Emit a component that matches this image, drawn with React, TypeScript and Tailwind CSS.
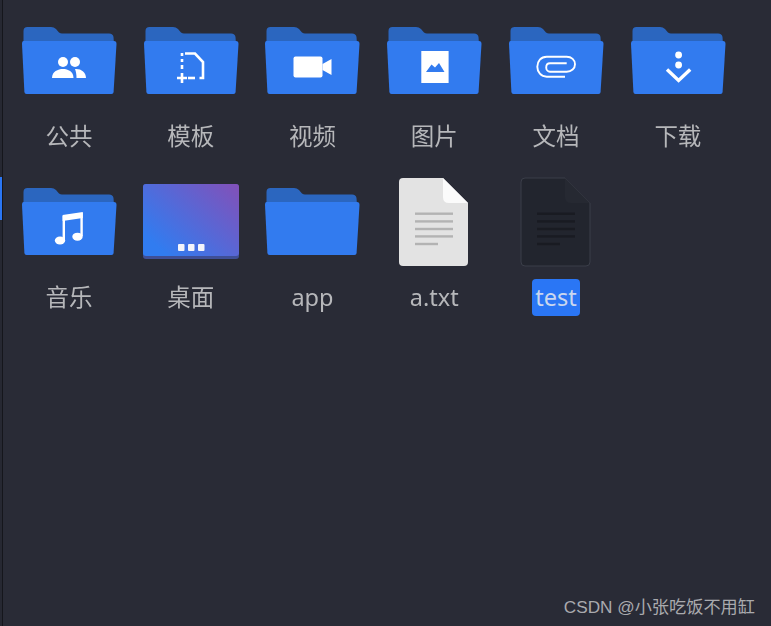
import React from "react";

const cjk = { fontFamily: '"Noto Sans", "Noto Sans CJK SC", sans-serif' };

function Folder({ children }: { children?: React.ReactNode }) {
  return (
    <svg width="96" height="70" viewBox="0 0 96 70" className="block">
      <path d="M2.5 7 Q2.5 3 6.5 3 H30 Q33 3 35 5 L38 8.5 Q39.5 9.5 41 9.5 H88 Q92 9.5 92.5 13 L93 20 H2.5 Z" fill="#2b66bf" />
      <path d="M2.5 17 H93 Q95.5 17 95.5 20 L92.6 68 Q92.4 70 90.5 70 H5.5 Q3.6 70 3.4 68 L1 20 Q1 17 2.5 17 Z" fill="#327bef" />
      {children}
    </svg>
  );
}

const People = (
  <g fill="#fff">
    <circle cx="42" cy="38" r="5" />
    <circle cx="54" cy="38" r="5" />
    <path d="M31 54 C31 47.5 37 45 42 45 C47 45 52.5 47.5 52.5 54 Z" />
    <path d="M54 45 C60 44.5 65 48 65 54 H55.5 C55.5 50.5 55 47.5 54 45 Z" />
  </g>
);
const Template = (
  <g fill="none" stroke="#fff" strokeWidth="2.6">
    <path d="M39 29 V32 M39 35 V38 M39 41 V45" />
    <path d="M42 29.5 H52 L60 38 V54 H56.5" />
    <path d="M45 54 H52" />
    <path d="M34 54 H44 M39 49 V59" />
  </g>
);
const Video = (
  <g fill="#fff">
    <rect x="29.5" y="32.5" width="29" height="21" rx="2" />
    <path d="M58.5 40 L67.5 35 V51 L58.5 46 Z" />
  </g>
);
const Picture = (
  <g>
    <rect x="35.3" y="27" width="27.3" height="32" fill="#fff" />
    <path d="M40 48 L45.5 40.5 L49 43.5 L53 39 L58.5 48 Z" fill="#327bef" />
  </g>
);
const Clip = (
  <g fill="none" stroke="#fff" strokeWidth="1.9">
    <path d="M57 52.7 H38.7 C33 52.7 29.3 48 29.3 42.7 C29.3 37 33 32.7 38.7 32.7 H58.7 C63.5 32.7 67 36 67 40.2 C67 44.5 63.5 47.7 58.7 47.7 H42 C39.8 47.7 38.2 45.8 38.2 43.5 C38.2 41 39.8 39.3 42 39.3 H58.7" />
  </g>
);
const Download = (
  <g>
    <circle cx="48.6" cy="31" r="3.4" fill="#fff" />
    <circle cx="48.6" cy="41" r="3.4" fill="#fff" />
    <path d="M37 45.5 L48.6 56.5 L60.2 45.5" fill="none" stroke="#fff" strokeWidth="3.4" />
  </g>
);
const Music = (
  <g>
    <path d="M42.8 55 V31 M60.6 51 V28" fill="none" stroke="#fff" strokeWidth="2.4" />
    <path d="M41.6 30 L61.8 27 V33 L41.6 36 Z" fill="#fff" />
    <ellipse cx="39" cy="55.5" rx="5.2" ry="4" fill="#fff" />
    <ellipse cx="56.5" cy="51.7" rx="5.2" ry="4" fill="#fff" />
  </g>
);

function Desktop() {
  return (
    <svg width="98" height="76" viewBox="0 0 98 76" className="block">
      <defs>
        <linearGradient id="desk" x1="0.05" y1="0.75" x2="1" y2="0">
          <stop offset="0" stopColor="#317cf0" />
          <stop offset="1" stopColor="#8350b8" />
        </linearGradient>
      </defs>
      <rect x="1" y="1" width="96" height="75" rx="3" fill="#3f4f96" />
      <rect x="1" y="1" width="96" height="72" rx="3" fill="url(#desk)" />
      <rect x="36" y="61" width="6.5" height="7" rx="1" fill="#f4f4fa" />
      <rect x="46" y="61" width="6.5" height="7" rx="1" fill="#f4f4fa" />
      <rect x="56" y="61" width="6.5" height="7" rx="1" fill="#f4f4fa" />
    </svg>
  );
}

function FileLines({ fill }: { fill: string }) {
  return (
    <g fill={fill}>
      <rect x="17" y="35.5" width="38" height="2.4" />
      <rect x="17" y="43.2" width="38" height="2.4" />
      <rect x="17" y="50.8" width="38" height="2.4" />
      <rect x="17" y="58.2" width="38" height="2.4" />
      <rect x="17" y="65.8" width="23" height="2.4" />
    </g>
  );
}

function TextFile() {
  return (
    <svg width="72" height="90" viewBox="0 0 72 90" className="mt-[4px] block">
      <path d="M5 1 H45 L70 26 V85 Q70 89 66 89 H5 Q1 89 1 85 V5 Q1 1 5 1 Z" fill="#e3e3e3" />
      <path d="M45 1 L70 26 H51 Q45 26 45 20 Z" fill="#fbfbfb" />
      <FileLines fill="#b3b3b3" />
    </svg>
  );
}

function DarkFile() {
  return (
    <svg width="72" height="90" viewBox="0 0 72 90" className="mt-[4px] block">
      <path d="M5 1 H45 L70 26 V85 Q70 89 66 89 H5 Q1 89 1 85 V5 Q1 1 5 1 Z" fill="#22252e" stroke="#3b3e49" strokeWidth="1" />
      <path d="M45 1 L70 26 H51 Q45 26 45 20 Z" fill="#262932" />
      <FileLines fill="#191b22" />
    </svg>
  );
}

function Item({ icon, label, selected }: { icon: React.ReactNode; label: string; selected?: boolean }) {
  return (
    <div className="flex h-[161px] flex-col items-center">
      <div className="flex h-[92px] items-center justify-center">{icon}</div>
      <div className="mt-[12px] flex h-[38px] items-center justify-center">
        <span
          style={cjk}
          className={
            selected
              ? "rounded-[4px] bg-[#2a76f5] px-[3px] text-[23.5px] leading-[37px] text-[#c9d6ee]"
              : "text-[23.5px] leading-[37px] text-[#b6b7ba]"
          }
        >
          {label}
        </span>
      </div>
    </div>
  );
}

export default function App() {
  return (
    <div className="relative flex h-[626px] w-[771px] overflow-hidden bg-[#292b36]">
      <div className="relative h-full w-[3px] shrink-0 border-r border-[#15161c] bg-[#262832]">
        <div className="absolute left-0 top-[177px] h-[43px] w-[2px] bg-[#2a76f5]" />
      </div>
      <div className="grid h-fit grid-cols-[repeat(6,121.8px)] pl-[5px] pt-[13px] blur-[0.4px]">
        <Item label="公共" icon={<Folder>{People}</Folder>} />
        <Item label="模板" icon={<Folder>{Template}</Folder>} />
        <Item label="视频" icon={<Folder>{Video}</Folder>} />
        <Item label="图片" icon={<Folder>{Picture}</Folder>} />
        <Item label="文档" icon={<Folder>{Clip}</Folder>} />
        <Item label="下载" icon={<Folder>{Download}</Folder>} />
        <Item label="音乐" icon={<Folder>{Music}</Folder>} />
        <Item label="桌面" icon={<div className="mt-[2px]"><Desktop /></div>} />
        <Item label="app" icon={<Folder />} />
        <Item label="a.txt" icon={<TextFile />} />
        <Item label="test" selected icon={<DarkFile />} />
      </div>
      <span
        className="absolute bottom-[9px] right-[16px] text-[17.2px] leading-[20px] text-[#a9aaae]"
        style={{ fontFamily: '"Liberation Sans", "Noto Sans CJK SC", sans-serif' }}
      >
        CSDN @小张吃饭不用缸
      </span>
    </div>
  );
}
